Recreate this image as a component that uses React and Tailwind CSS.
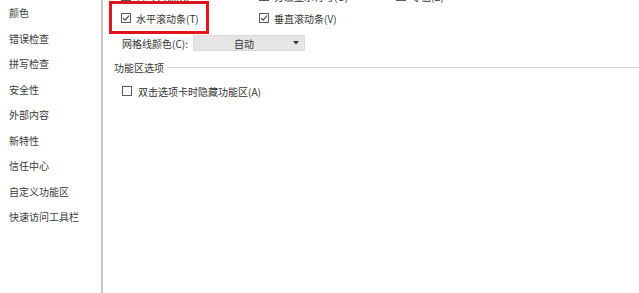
import React from 'react';

const font = { fontFamily: '"Noto Sans CJK SC", "Noto Sans", sans-serif' };

const Check = ({ checked }) => (
  <span className="w-[10px] h-[10px] border border-[#5a5a5a] bg-white flex items-center justify-center flex-shrink-0">
    {checked && (
      <svg width="8" height="8" viewBox="0 0 8 8">
        <path d="M1 4.2 L3.1 6.2 L7 1.6" fill="none" stroke="#444" strokeWidth="1.1" />
      </svg>
    )}
  </span>
);

const Option = ({ label, checked }) => (
  <div className="h-[22px] flex items-center gap-[5px] text-[10px] text-[#333] whitespace-nowrap">
    <Check checked={checked} />
    <span>{label}</span>
  </div>
);

const menu = ['颜色', '错误检查', '拼写检查', '安全性', '外部内容', '新特性', '信任中心', '自定义功能区', '快速访问工具栏'];

export default function App() {
  return (
    <div className="w-[639px] h-[293px] bg-white flex overflow-hidden" style={font}>
      {/* sidebar */}
      <div className="w-[103px] flex-shrink-0 flex flex-col pl-[9px] border-r-2 border-[#c6c6c6]">
        {menu.map((m) => (
          <div key={m} className="h-[25.5px] flex items-center text-[10px] text-[#3a3a3a]">{m}</div>
        ))}
      </div>

      {/* content */}
      <div className="relative flex-1 flex flex-col">
        <div className="grid grid-cols-[138px_137px_120px] pl-[18px] -mt-[15px]">
          <Option label="行号列标(R)" checked />
          <Option label="分级显示符号(O)" checked />
          <Option label="零值(Z)" checked />
          <Option label="水平滚动条(T)" checked />
          <Option label="垂直滚动条(V)" checked />
        </div>

        <div className="flex items-center pl-[19px] mt-[6px] text-[10px] text-[#333]">
          <span className="w-[71px]">网格线颜色(C):</span>
          <div className="w-[112px] h-[16px] bg-[#e5e5e5] border border-[#dadada] flex items-center justify-between pl-[40px] pr-[5px]">
            <span>自动</span>
            <svg width="6" height="4" viewBox="0 0 6 4">
              <path d="M0 0 L6 0 L3 3.5 Z" fill="#333" />
            </svg>
          </div>
        </div>

        <div className="flex items-center gap-[3px] pl-[11px] mt-[9px] text-[10px] text-[#333]">
          <span>功能区选项</span>
          <div className="flex-1 h-px bg-[#d6d6d6]" />
        </div>

        <div className="pl-[19px] mt-[5px]">
          <div className="h-[22px] flex items-center gap-[6px] text-[10px] text-[#333]">
            <Check />
            <span>双击选项卡时隐藏功能区(A)</span>
          </div>
        </div>

        {/* annotation highlight */}
        <div className="absolute left-[6px] top-[1px] w-[100px] h-[33px] border-[3px] border-[#e0141c]" />
      </div>
    </div>
  );
}
